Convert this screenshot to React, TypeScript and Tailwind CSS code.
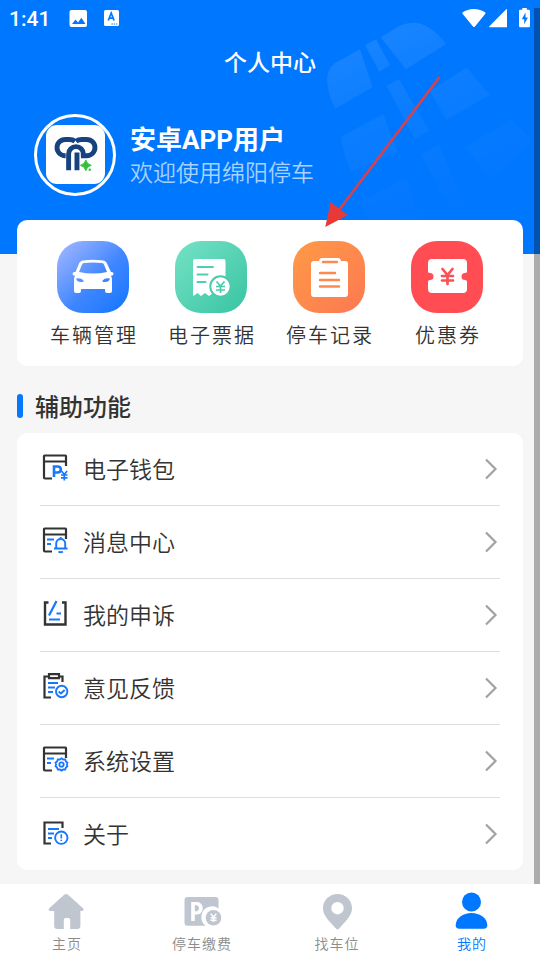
import type { ReactNode } from "react";
import { clsx } from "clsx";

const DARK = "#333333";
const BLUE = "#1677ff";

export default function App() {
  return (
    <div className="relative flex h-[960px] w-[540px] flex-col overflow-hidden bg-[#f6f6f6] font-['Roboto','Noto_Sans_CJK_SC',sans-serif] text-[#333]">
      <Header />

      <main className="relative -mt-[34px] flex-1 px-[17px]">
        <section className="grid h-[146px] grid-cols-4 rounded-[10px] bg-white px-[17px] pt-[21px]">
          <Shortcut label="车辆管理" tile="bg-linear-to-br from-[#a5b9ff] via-[#3f86ff] via-55% to-[#0075ff]">
            <CarIcon />
          </Shortcut>
          <Shortcut label="电子票据" tile="bg-linear-to-br from-[#74e2c6] to-[#35c4a2]">
            <ReceiptIcon />
          </Shortcut>
          <Shortcut label="停车记录" tile="bg-linear-to-br from-[#ff9a45] to-[#fc7852]">
            <ClipboardIcon />
          </Shortcut>
          <Shortcut label="优惠券" tile="bg-[#ff4d53]">
            <CouponIcon />
          </Shortcut>
        </section>

        <h2 className="mt-[22px] flex h-9 items-center text-2xl font-medium">
          <span className="mr-3 h-6 w-1.5 rounded-full bg-[#0777fb]" />
          <span className="pt-[3px]">辅助功能</span>
        </h2>

        <ul className="mt-[9px] rounded-[10px] bg-white px-[23px]">
          <Row label="电子钱包" icon={<WalletIcon />} />
          <Row label="消息中心" icon={<MessageIcon />} />
          <Row label="我的申诉" icon={<AppealIcon />} />
          <Row label="意见反馈" icon={<FeedbackIcon />} />
          <Row label="系统设置" icon={<SettingsIcon />} />
          <Row label="关于" icon={<AboutIcon />} last />
        </ul>
      </main>

      <nav className="grid h-[76px] shrink-0 grid-cols-4 bg-white">
        <Tab label="主页">
          <path d="M16.200 1.800a3 3 0 0 1 3.800 0l15 13.400c1.300 1.200.6 2.800-1 2.800h-1.600v15a3 3 0 0 1-3 3h-7.200V27a2 2 0 0 0-2-2h-2.400a2 2 0 0 0-2 2v9H9.200a3 3 0 0 1-3-3V18H2.300c-1.600 0-2.300-1.600-1-2.800z" />
        </Tab>
        <Tab label="停车缴费">
          <path
            fillRule="evenodd"
            d="M4.500 4h28a3 3 0 0 1 3 3v8.500A10.200 10.200 0 0 0 22.500 32.700H4.500a3 3 0 0 1-3-3V7a3 3 0 0 1 3-3zM8.200 9v19h3.600v-6.500h1.900c8 0 8-12.500 0-12.500zm3.600 3.300h1.700c3.300 0 3.300 6 0 6h-1.700z"
          />
          <circle cx="30.500" cy="24.700" r="7.800" />
          <path
            d="M27.700 20.700l2.800 3.200 2.800-3.200M27.500 24.700h6M27.500 27.200h6M30.500 23.700v5.300"
            stroke="#fff"
            strokeWidth="1.500"
            fill="none"
          />
        </Tab>
        <Tab label="找车位">
          <path
            fillRule="evenodd"
            d="M19.500 1C27.500 1 34 7.200 34 15.200c0 8-7 13.300-12.900 20.300a2.200 2.200 0 0 1-3.200 0C12 28.500 5 23.200 5 15.200 5 7.200 11.500 1 19.500 1zm0 8a6.200 6.200 0 1 0 0 12.400 6.200 6.200 0 0 0 0-12.400z"
          />
        </Tab>
        <Tab label="我的" active>
          <circle cx="18.500" cy="9" r="9.500" />
          <path d="M18.500 20c8.500 0 15.800 5 15.800 12.300 0 2.200-1.200 3.500-3.500 3.500H6.200c-2.300 0-3.500-1.300-3.500-3.500C2.700 25 10 20 18.500 20z" />
        </Tab>
      </nav>

      {/* page scrollbar */}
      <div className="absolute top-2 right-0 h-[876px] w-1.5 bg-black/30" />

      {/* red pointer towards the parking records */}
      <svg
        className="pointer-events-none absolute top-[70px] left-[318px]"
        width="130"
        height="164"
        viewBox="318 70 130 164"
        aria-hidden
      >
        <path d="M439.500 77L339 210" stroke="#d5424b" strokeWidth="2.600" />
        <path d="M325.300 227l5.300-25 17.200 13z" fill="#e73a38" />
      </svg>
    </div>
  );
}

function Header() {
  return (
    <header className="relative h-[254px] shrink-0 bg-[#0077ff] text-white">
      <Globe />
      <div className="relative flex h-9 items-center pr-[9px] pl-[9px]">
        <span className="pt-0.5 text-[21px] leading-none font-medium">1:41</span>
        <svg className="ml-[18px]" width="52" height="20" viewBox="0 0 52 20" aria-hidden>
          <rect x="1.500" y="2" width="17.500" height="17" rx="2" fill="#fff" />
          <path d="M4 16l3.500-4.600 2.500 3 3.400-4.600 4.100 6.200z" fill="#0077ff" />
          <rect x="36" y="2" width="15" height="16" rx="1.500" fill="#fff" />
          <path d="M40.300 12.500l2.900-7.500 2.900 7.500M41.300 10.200h3.800" stroke="#0077ff" strokeWidth="1.700" fill="none" />
          <path d="M43.500 16h1.300m1 0h1.300m1 0h1.300" stroke="#0077ff" strokeWidth="1.200" />
        </svg>
        <svg className="ml-auto" width="70" height="22" viewBox="0 0 70 22" aria-hidden>
          <g fill="#fff">
            <path d="M1.500 5.600C7.500.8 18.300.8 24.300 5.600q.5.600 0 1.200L14 19.500q-1 1-2 0L1.500 6.800q-.500-.600 0-1.200z" />
            <path d="M46 2.800v17.500H28.800q-1.300 0-.400-1L45 2.400q1-.8 1 .4z" />
            <path d="M61.300 1h4.500v1.800h2a1.200 1.200 0 0 1 1.200 1.200v15a1.200 1.200 0 0 1-1.200 1.200h-8.600A1.200 1.200 0 0 1 58 19V4a1.200 1.200 0 0 1 1.200-1.200h2.100z" />
          </g>
          <path d="M64.500 5.500l-3.700 6.700h2.400v5l3.700-6.600h-2.400z" fill="#0077ff" />
        </svg>
      </div>

      <h1 className="relative h-[54px] text-center text-[23px] leading-[56px] font-medium">个人中心</h1>

      <div className="relative mt-6 flex items-center pl-[34px]">
        <div className="flex size-[82px] items-center justify-center rounded-full border-3 border-white">
          <Logo />
        </div>
        <div className="ml-3.5 pt-1">
          <p className="text-[26px] leading-[34px] font-bold">安卓APP用户</p>
          <p className="text-[23px] leading-[34px] font-[350] text-[#a8d2ff]">欢迎使用绵阳停车</p>
        </div>
      </div>
    </header>
  );
}

// faded globe panels in the header's top right corner
function Globe() {
  return (
    <svg
      className="absolute top-0 left-[300px]"
      width="240"
      height="254"
      viewBox="0 0 720 762"
      aria-hidden
    >
      <defs>
        <linearGradient id="globe" gradientUnits="userSpaceOnUse" x1="200" y1="80" x2="440" y2="640">
          <stop offset="0" stopColor="#fff" stopOpacity=".1" />
          <stop offset=".5" stopColor="#fff" stopOpacity=".04" />
          <stop offset="1" stopColor="#fff" stopOpacity=".005" />
        </linearGradient>
      </defs>
      <g fill="url(#globe)">
        <path d="M82 250q-4-40 22-60l76-42 38 114-113 64q-19-38-23-76z" />
        <path d="M195 135l33-17 42 77-32 20z" />
        <path d="M242 112l60-36q72-30 136 56l-120 76z" />
        <path d="M260 258l37-20 91 154-43 26z" />
        <path d="M390 272l110-69 70 82-132 75z" />
        <path d="M122 410l128-67 42 112-137 60q-25-50-33-105z" />
        <path d="M363 462l54-28 76 176-60-10z" />
        <path d="M495 440l140-80 60 60-115 125z" />
        <path d="M180 605l140-70 40 125H205z" />
      </g>
    </svg>
  );
}

function Logo() {
  return (
    <svg
      className="mb-0.5 shrink-0 rounded-[11px] bg-white"
      width="59"
      height="59"
      viewBox="0 0 60 60"
      aria-hidden
    >
      <g fill="none" stroke="#17427f" strokeWidth="5">
        <path d="M29.500 16.500c-2-1.500-4-1.800-6-1.800h-4a8.300 8.300 0 0 0 0 16.600h.5" />
        <path d="M30.500 16.500c2-1.500 4-1.800 6-1.800h5a8.300 8.300 0 0 1 0 16.600h-6" />
        <path d="M23 46V29.500a7.500 7.500 0 0 1 15 0v2" />
        <path d="M31.500 46V28" />
      </g>
      <path d="M40.500 35.500q1 4.500 5.500 5.500-4.500 1-5.500 5.500-1-4.500-5.500-5.500 4.500-1 5.500-5.500z" fill="#2fc13b" stroke="#2fc13b" />
      <circle cx="44.500" cy="45.500" r="1.200" fill="#2fc13b" />
    </svg>
  );
}

function Shortcut({ label, tile, children }: { label: string; tile: string; children: ReactNode }) {
  return (
    <div className="flex flex-col items-center">
      <div className={clsx("size-[72px] rounded-[26px]", tile)}>
        <svg width="72" height="72" viewBox="0 0 72 72" aria-hidden>
          {children}
        </svg>
      </div>
      <span className="mt-[9px] pl-0.5 text-[20px] leading-7 font-[350] tracking-[2px] whitespace-nowrap">
        {label}
      </span>
    </div>
  );
}

function CarIcon() {
  return (
    <path
      fill="#fff"
      fillRule="evenodd"
      d="M26 19.500q10-1.500 20 0c2 .3 3 1.200 4 3l4 8.500q2.500-.5 2.500 2 0 1.500-2.500 1.800 1 2 1 4.200v11a2 2 0 0 1-2 2h-3a2 2 0 0 1-2-2v-2H24v2a2 2 0 0 1-2 2h-3a2 2 0 0 1-2-2V39q0-2.200 1-4.200-2.500-.3-2.500-1.800 0-2.500 3-2l3.500-8.500c1-1.800 2-2.700 4-3zM27 22q-1.500.2-2.200 2L22 31q14 3 28 0l-2.800-7q-.7-1.800-2.200-2-9-1-18 0zm-8 15.500q1 4 6 3.500 2 0 1.500-1.500-2.500-3-7.500-2zm34 0q-1 4-6 3.500-2 0-1.500-1.500 2.500-3 7.500-2z"
    />
  );
}

function ReceiptIcon() {
  return (
    <>
      <path
        d="M20 18h28.500a2 2 0 0 1 2 2v34l-4-2-4 3-4.500-3-4 3-4-3-4 3-3.500-3-4 3-.5-1V20a2 2 0 0 1 2-2z"
        fill="#fff"
      />
      <path d="M22.500 26H38M22.500 33.500h10M22.500 41h8" stroke="#51ceb0" strokeWidth="2" strokeLinecap="round" />
      <circle cx="45.500" cy="45.500" r="10.200" fill="#fff" stroke="#4acbab" strokeWidth="2" />
      <path
        d="M41.500 40.500l4 4.500 4-4.500M41 45.500h9M41 49h9M45.500 45v7"
        stroke="#4acbab"
        strokeWidth="1.700"
        fill="none"
      />
    </>
  );
}

function ClipboardIcon() {
  return (
    <>
      <path
        d="M21 20h5q.5-3 3-3h16q2.500 0 3 3h4a3 3 0 0 1 3 3v30a3 3 0 0 1-3 3H21a3 3 0 0 1-3-3V23a3 3 0 0 1 3-3z"
        fill="#fff"
      />
      <path
        d="M30 21h14M27 32h15M27 39h19M27 45.500h19"
        stroke="#fb8950"
        strokeWidth="2.400"
        strokeLinecap="round"
      />
    </>
  );
}

function CouponIcon() {
  return (
    <>
      <path
        d="M21 18h31a4 4 0 0 1 4 4v8.500q0 1.500-2 1.500a3.500 3.500 0 0 0 0 7q2 0 2 1.500V48a4 4 0 0 1-4 4H21a4 4 0 0 1-4-4v-7.500q0-1.500 2-1.500a3.500 3.500 0 0 0 0-7q-2 0-2-1.500V22a4 4 0 0 1 4-4z"
        fill="#fff"
      />
      <path
        d="M31.500 28l5 6 5-6M31 35h11M31 39.500h11M36.500 34v9"
        stroke="#fa5157"
        strokeWidth="2.700"
        strokeLinecap="round"
        fill="none"
      />
    </>
  );
}

function Row({ label, icon, last = false }: { label: string; icon: ReactNode; last?: boolean }) {
  return (
    <li className={clsx("flex items-center", last ? "h-[72px]" : "h-[73px] border-b border-[#dedede]")}>
      <svg className="mb-1 ml-px" width="28" height="28" viewBox="0 0 28 28" fill="none" strokeWidth="2.200" aria-hidden>
        {icon}
      </svg>
      <span className="ml-3.5 flex-1 pt-[3px] text-[23px] leading-8 font-[350]">{label}</span>
      <svg className="mr-0.5" width="14" height="22" viewBox="0 0 14 22" aria-hidden>
        <path d="M2 1.500l9.500 9.500L2 20.500" stroke="#a2a2a2" strokeWidth="2.200" fill="none" />
      </svg>
    </li>
  );
}

// window outline shared by the wallet, message and settings icons
function WindowFrame() {
  return <path d="M11 25.500H4q-1 0-1-1V3q0-.5.500-.5H24.500q.5 0 .5.500V13M3 8.500h22" stroke={DARK} />;
}

function WalletIcon() {
  return (
    <>
      <WindowFrame />
      <path d="M13 24V13.500h3.500c4.400 0 4.400 6 0 6H13" stroke={BLUE} strokeWidth="2.600" />
      <path d="M20.500 18l2.800 3.500 2.800-3.500M20 22h6.500M20 24.800h6.500M23.300 21v6.500" stroke={BLUE} strokeWidth="1.700" />
    </>
  );
}

function MessageIcon() {
  return (
    <>
      <WindowFrame />
      <path d="M6 13.500h7M6 18h4" stroke={BLUE} />
      <path d="M13 22.500h13.500M15.200 22v-4.500c0-6 9-6 9 0V22M19.700 13v-2M17.500 25.500q2.200 1.500 4.400 0" stroke={BLUE} strokeWidth="1.900" />
    </>
  );
}

function AppealIcon() {
  return (
    <>
      <path d="M7.500 3.500H4v22h20.500v-22H21" stroke={DARK} strokeWidth="2.400" />
      <path d="M8 16.500L15.500 2M15.500 14.500h4.500M8 20.500h11" stroke={BLUE} strokeWidth="2.200" />
    </>
  );
}

function FeedbackIcon() {
  return (
    <>
      <path d="M10 25.500H3.500v-21H8M18 4.500h3.500V10M8 2.200h10v4H8z" stroke={DARK} />
      <path d="M7 11h10M7 15.500h7M7 20h5" stroke={BLUE} />
      <circle cx="20.700" cy="19.500" r="5.700" stroke={BLUE} strokeWidth="1.900" />
      <path d="M17.700 19.500l2.200 2 3.800-3.500" stroke={BLUE} strokeWidth="1.900" />
    </>
  );
}

function SettingsIcon() {
  return (
    <>
      <WindowFrame />
      <path d="M6 13.500h7M6 18h4" stroke={BLUE} />
      <path
        d="M16.800 14.500h2l1.700-1.200 1.700 1.200h2l.7 2 1.500 1.200-.5 1.800.5 1.800-1.500 1.300-.7 1.900h-2l-1.700 1.200-1.700-1.200h-2l-.700-1.900-1.600-1.300.6-1.800-.6-1.800 1.600-1.200z"
        stroke={BLUE}
        strokeWidth="1.800"
      />
      <circle cx="20.500" cy="19.500" r="2.200" stroke={BLUE} strokeWidth="1.800" />
    </>
  );
}

function AboutIcon() {
  return (
    <>
      <path d="M10 25.500H3.500v-21h18V10" stroke={DARK} />
      <path d="M7 11h11M7 15.500h6M7 20h4" stroke={BLUE} />
      <circle cx="20.300" cy="19.700" r="6.200" stroke={BLUE} strokeWidth="1.900" />
      <path d="M20.300 16.300v4.200M20.300 21.800v1.300" stroke={BLUE} strokeWidth="1.600" />
    </>
  );
}

function Tab({ label, active = false, children }: { label: string; active?: boolean; children: ReactNode }) {
  return (
    <div className={clsx("flex flex-col items-center pt-[9px] pr-0.5", active ? "text-[#0077ff]" : "text-[#8c8c8c]")}>
      <svg
        className={clsx("overflow-visible", !active && "text-[#c0c6d0]")}
        width="38"
        height="38"
        viewBox="0 0 38 38"
        fill="currentColor"
        aria-hidden
      >
        {children}
      </svg>
      <span className="mt-0.5 pl-px text-sm leading-[22px] font-[350] tracking-[1px]">{label}</span>
    </div>
  );
}
